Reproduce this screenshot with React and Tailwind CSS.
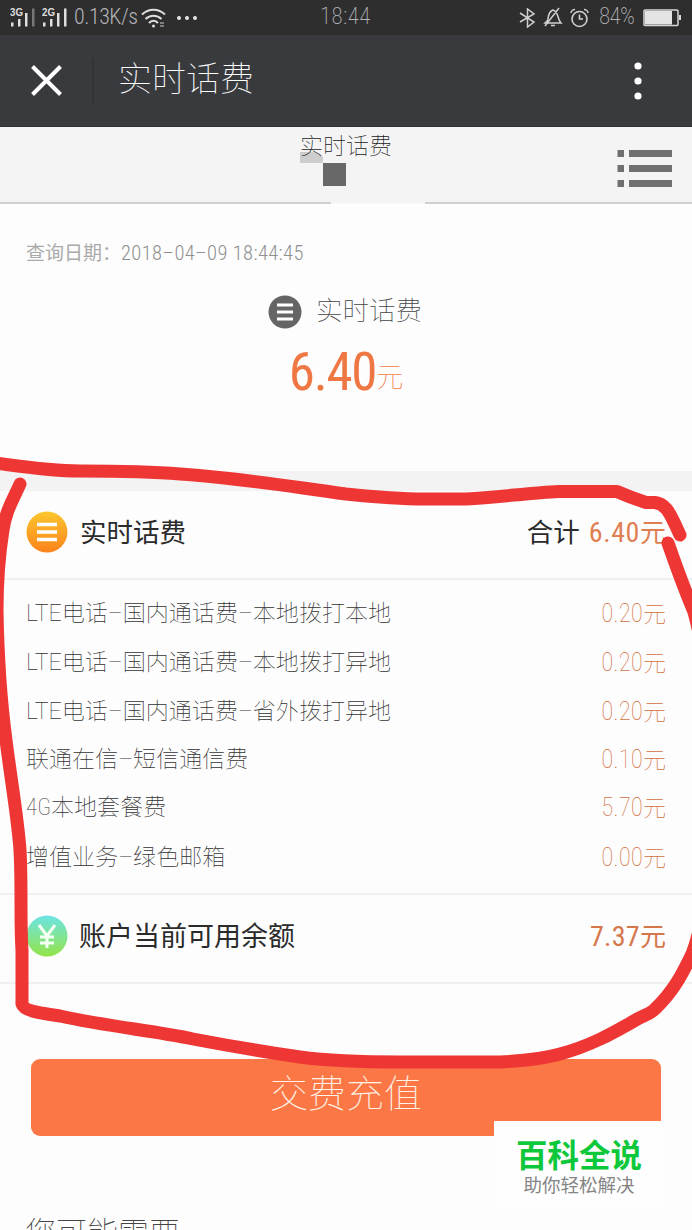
import React from 'react'
import clsx from 'clsx'

const charges = [
  { name: 'LTE电话–国内通话费–本地拨打本地', amount: '0.20', height: 'h-[50px]' },
  { name: 'LTE电话–国内通话费–本地拨打异地', amount: '0.20', height: 'h-[49px]' },
  { name: 'LTE电话–国内通话费–省外拨打异地', amount: '0.20', height: 'h-12' },
  { name: '联通在信–短信通信费', amount: '0.10', height: 'h-12' },
  { name: '4G本地套餐费', amount: '5.70', height: 'h-[49px]', narrow: true },
  { name: '增值业务–绿色邮箱', amount: '0.00', height: 'h-[50px]' },
]

function Signal({ label, weak }) {
  return (
    <svg width="26" height="20" viewBox="0 0 26 20" fill="#dedede">
      <text x="0" y="7.500" fontSize="10" fontWeight="700" textLength="13" lengthAdjust="spacingAndGlyphs" fontFamily="Liberation Sans, sans-serif">{label}</text>
      <rect x="1" y="14.5" width="2.5" height="4" />
      <rect x="8" y="11" width="2.5" height="7.5" />
      <rect x="15" y="5" width="2.5" height="13.5" />
      <rect x="22" y="0.5" width="2.5" height="18" fill={weak ? '#777' : '#dedede'} />
    </svg>
  )
}

function StatusBar() {
  return (
    <div className="flex h-[35px] items-center bg-[#2e2e2f] text-[#b4b4b6]">
      <div className="flex w-[320px] items-center pl-2.5">
        <Signal label="3G" weak />
        <span className="w-1.5" />
        <Signal label="2G" />
        <span className="ml-1.5 w-[65px] pb-0.5 text-[22px] font-light leading-none tracking-[-0.5px] [font-stretch:75%]">0.13K/s</span>
        <svg className="ml-0.5" width="25" height="20" viewBox="0 0 25 20" fill="none" stroke="#dedede" strokeWidth="2">
          <path d="M1 6.5C7.5 0 17.5 0 24 6.5M4.5 11C9 6.5 16 6.5 20.5 11M8 15C10.5 12 14.5 12 17 15" />
          <circle cx="12.5" cy="18" r="1.5" fill="#dedede" stroke="none" />
          <path d="M19 15h4M19 18h4" stroke="#999" strokeWidth="1.5" />
        </svg>
        <svg className="ml-2.5" width="22" height="6" viewBox="0 0 22 6" fill="#e4e4e4">
          <circle cx="3" cy="3" r="2" />
          <circle cx="11" cy="3" r="2" />
          <circle cx="19" cy="3" r="2" />
        </svg>
      </div>
      <span className="w-[52px] pb-0.5 text-[23px] font-extralight leading-none tracking-[0.4px] [font-stretch:75%]">18:44</span>
      <div className="flex flex-1 items-center justify-end pr-2.5">
        <svg width="17" height="20" viewBox="0 0 17 20" fill="none" stroke="#d0d0d0" strokeWidth="1.5">
          <path d="M1 5l14 9-6.500 5V1L15 6 1 14" />
        </svg>
        <svg className="ml-[7px]" width="20" height="21" viewBox="0 0 20 21" fill="none" stroke="#d0d0d0" strokeWidth="1.500">
          <path d="M4 15c2-3 0-10 6-12 6 2 4 9 8 13H2l2-2M2 19L16 1M8 18.500h4" />
        </svg>
        <svg className="ml-[7px]" width="19" height="20" viewBox="0 0 19 20" fill="none" stroke="#d0d0d0" strokeWidth="1.600">
          <circle cx="9.500" cy="11" r="7.500" />
          <path d="M9.500 6.500V11H13M1 5C1 3 3 1.500 5 1.500M18 5c0-2-2-3.500-4-3.500" />
        </svg>
        <span className="ml-2.5 w-[34px] pb-[3px] text-[23px] font-extralight leading-none tracking-[-0.7px] [font-stretch:75%]">84%</span>
        <svg className="ml-2.5" width="39" height="18" viewBox="0 0 39 18">
          <rect x="1" y="1" width="34" height="15.500" rx="1" fill="none" stroke="#d8d8d8" strokeWidth="1.500" />
          <rect x="2" y="2" width="27" height="13.500" fill="#e4e4e4" />
          <rect x="36" y="6" width="2" height="5" fill="#d8d8d8" />
        </svg>
      </div>
    </div>
  )
}

function TitleBar() {
  return (
    <div className="flex h-[92px] items-center border-b border-[#303035] bg-[#393a3e]">
      <svg className="ml-[31px]" width="31" height="31" viewBox="0 0 31 31" stroke="#fff" strokeWidth="4">
        <path d="M1.500 1.500l28 28M29.500 1.500l-28 28" />
      </svg>
      <div className="ml-[30px] h-[46px] w-0.5 bg-[#323337]" />
      <h1 className="ml-6 pb-1 text-[34px] font-thin leading-none text-white">实时话费</h1>
      <svg className="ml-auto mr-[50px]" width="8" height="38" viewBox="0 0 8 38" fill="#fff">
        <circle cx="4" cy="4" r="3.600" />
        <circle cx="4" cy="19" r="3.600" />
        <circle cx="4" cy="34" r="3.600" />
      </svg>
    </div>
  )
}

function PageHeader() {
  return (
    <div className="relative flex h-[77px] justify-center border-b-2 border-[#d0d0d0] bg-[#f4f4f4]">
      {/* leftover blocks around the caption */}
      <div className="absolute left-[300px] top-[25px] h-[11px] w-[23px] bg-[#cdcdcd] [clip-path:polygon(0_0,60%_0,100%_45%,100%_100%,0_100%)]" />
      <div className="absolute left-[323px] top-[36px] h-[23px] w-[23px] bg-[#686868]" />
      <div className="absolute -bottom-0.5 left-[331px] h-0.5 w-[94px] bg-[#f7f7f7]" />
      <span className="relative mt-2 text-[23px] font-thin leading-[24px] text-[#222]">实时话费</span>
      <svg className="absolute left-[617px] top-[23px]" width="56" height="37" viewBox="0 0 56 37" fill="#707070">
        <path d="M0.500 0h6.500v7H0.500zM12 0h43v7H12zM0.500 15h6.500v7H0.500zM12 15h43v7H12zM0.500 30h6.500v7H0.500zM12 30h43v7H12z" />
      </svg>
    </div>
  )
}

function Summary() {
  return (
    <section className="h-[267px] pt-9">
      <p className="ml-[26px] text-[19px] leading-[26px] text-[#aaa]">
        查询日期：<span className="text-[20.500px] font-light tracking-[0.37px] text-[#909090] [font-stretch:75%]">2018–04–09 18:44:45</span>
      </p>
      <div className="mt-[26px] flex items-center justify-center gap-3.5 pr-0.5">
        <svg className="mt-0.5" width="34" height="34" viewBox="0 0 34 34">
          <circle cx="17" cy="17" r="16.500" fill="#656565" />
          <path d="M9 10h16M9 17h16M9 24h16" stroke="#fff" strokeWidth="2.800" />
        </svg>
        <span className="text-[26.500px] font-thin leading-[36px] text-[#444]">实时话费</span>
      </div>
      <p className="mt-[13px] flex items-baseline justify-center text-[#ee7743]">
        <span className="text-[53px] leading-[60px] tracking-[-1.3px] [font-stretch:75%]">6.40</span>
        <span className="relative -top-[3px] text-[27px] font-thin">元</span>
      </p>
    </section>
  )
}

function BillHeader() {
  return (
    <div className="flex h-[89px] items-center border-b-2 border-[#f0f0f0] px-[26px] pb-1.5">
      <svg width="42" height="42" viewBox="0 0 42 42">
        <defs>
          <linearGradient id="bill" x1="0" y1="0" x2="0" y2="1">
            <stop offset="0" stopColor="#fbc72e" />
            <stop offset="1" stopColor="#fb821c" />
          </linearGradient>
        </defs>
        <circle cx="21" cy="21" r="20.500" fill="url(#bill)" />
        <path d="M11 13.500h20M11 21h20M11 28.500h20" stroke="#fff" strokeWidth="3.300" />
      </svg>
      <h2 className="ml-3 mt-0.5 text-[26.500px] text-[#2b2b2b]">实时话费</h2>
      <span className="ml-auto mr-[9px] mt-0.5 text-[26.500px] text-[#2b2b2b]">合计</span>
      <span className="mt-0.5 text-[26px] text-[#e08052]"><span className="text-[28px] tracking-[0.6px] [font-stretch:75%]">6.40</span>元</span>
    </div>
  )
}

function ChargeList() {
  return (
    <ul className="h-[313px] pt-[9px]">
      {charges.map((c) => (
        <li key={c.name} className={clsx('flex items-center justify-between px-[26px] text-[23.050px] font-thin', c.height)}>
          <span className={clsx('whitespace-nowrap text-[#333]', c.narrow && '[font-stretch:75%]')}>{c.name}</span>
          <span className="-mt-px text-[#d2703f]"><span className="text-[25px] [font-stretch:75%]">{c.amount}</span>元</span>
        </li>
      ))}
    </ul>
  )
}

function Balance() {
  return (
    <div className="flex h-[91px] items-center border-y-2 border-[#f0f0f0] px-[26px] pb-[5px]">
      <svg width="42" height="42" viewBox="0 0 42 42">
        <defs>
          <linearGradient id="balance" x1="0" y1="0" x2="0" y2="1">
            <stop offset="0" stopColor="#6ce4e4" />
            <stop offset="1" stopColor="#94e448" />
          </linearGradient>
        </defs>
        <circle cx="21" cy="21" r="20.500" fill="url(#balance)" />
        <path d="M13 10l8 11 8-11M21 21v12M14 22h14M14 28h14" fill="none" stroke="#f4fff4" strokeWidth="3" />
      </svg>
      <h2 className="ml-[11px] mt-0.5 text-[27px] text-[#2b2b2b]">账户当前可用余额</h2>
      <span className="ml-auto mt-0.5 text-[26px] text-[#d5774c]"><span className="text-[28px] tracking-[0.3px] [font-stretch:75%]">7.37</span>元</span>
    </div>
  )
}

// hand-drawn red marker around the bill details
function Marker() {
  return (
    <svg className="pointer-events-none absolute inset-0" width="692" height="1230" viewBox="0 0 692 1230" fill="none" stroke="#ee3635" strokeWidth="13" strokeLinecap="round" strokeLinejoin="round">
      <path d="M-5 463C25 467 50 471 80 471C115 471 145 471 180 474C240 478 280 485 346 494C375 497 395 499 425 499H466C500 497 530 493 559 491.500H617C627 496 635 499 646 502.500H655C666 504 670 514 674 522L680 535" />
      <path d="M20 484C13 500 6 510 3 530C-1 555-3 580-3 610C-2 670 2 710 6 740C11 780 18 820 20 850C22 885 20 920 22 950V1004C24 1011 40 1013 60 1016C110 1027 150 1030 193 1039C230 1046 265 1052 300 1057C330 1061 365 1062 400 1062H500C520 1061 546 1058 560 1054C590 1046 613 1033 634 1021C643 1015 651 1014 655 1009C675 990 683 972 692 954C720 880 718 700 694 612C684 588 676 566 668 543" />
    </svg>
  )
}

function Watermark() {
  return (
    <div className="absolute left-[494px] top-[1121px] flex h-[85px] w-[170px] flex-col items-center bg-[#fefefe] pt-[18px]">
      <span className="text-[31.500px] font-bold leading-[35px] text-[#0ec83c]">百科全说</span>
      <span className="text-[18.500px] leading-[24px] text-[#858585]">助你轻松解决</span>
    </div>
  )
}

export default function App() {
  return (
    <div className="relative h-[1230px] w-[692px] overflow-hidden bg-[#fdfdfd] font-['Roboto','Noto_Sans_CJK_SC',sans-serif]">
      <StatusBar />
      <TitleBar />
      <PageHeader />
      <Summary />
      <div className="h-5 bg-[#f3f3f3]" />
      <BillHeader />
      <ChargeList />
      <Balance />
      <button className="mx-[31px] mt-[75px] block h-[77px] w-[630px] rounded-[9px] bg-[#fb7846] pb-1.5 text-[38px] font-thin text-[#fff3e8]">
        交费充值
      </button>
      <p className="ml-[25px] mt-[75px] whitespace-nowrap text-[31px] font-thin text-[#444]">您可能需要</p>
      <Marker />
      <Watermark />
    </div>
  )
}
